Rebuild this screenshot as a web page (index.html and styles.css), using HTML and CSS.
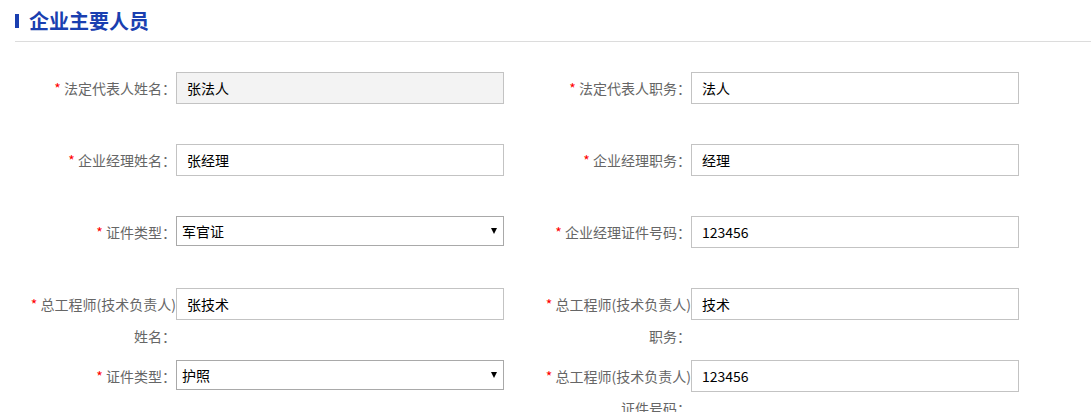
FILE: index.html
```html
<!DOCTYPE html>
<html>

<head>
    <meta charset="utf-8" />
    <title>企业主要人员</title>
    <meta name="viewport" content="width=device-width, initial-scale=1">
    <link rel="stylesheet" href="styles.css">
</head>

<body>

    <div class="panel">
        <div class="panel-title">
            <span class="title-mark"></span>
            <h3>企业主要人员</h3>
        </div>

        <form class="staff-form">
            <div class="form-item">
                <label class="form-label"><span class="req">*</span> 法定代表人姓名：</label>
                <input class="form-input" type="text" value="张法人" disabled>
            </div>
            <div class="form-item">
                <label class="form-label"><span class="req">*</span> 法定代表人职务：</label>
                <input class="form-input" type="text" value="法人">
            </div>

            <div class="form-item">
                <label class="form-label"><span class="req">*</span> 企业经理姓名：</label>
                <input class="form-input" type="text" value="张经理">
            </div>
            <div class="form-item">
                <label class="form-label"><span class="req">*</span> 企业经理职务：</label>
                <input class="form-input" type="text" value="经理">
            </div>

            <div class="form-item">
                <label class="form-label"><span class="req">*</span> 证件类型：</label>
                <span class="select-wrap">
                    <select class="form-select">
                        <option>身份证</option>
                        <option selected>军官证</option>
                        <option>护照</option>
                    </select>
                </span>
            </div>
            <div class="form-item">
                <label class="form-label"><span class="req">*</span> 企业经理证件号码：</label>
                <input class="form-input" type="text" value="123456">
            </div>

            <div class="form-item">
                <label class="form-label"><span class="req">*</span> 总工程师(技术负责人)姓名：</label>
                <input class="form-input" type="text" value="张技术">
            </div>
            <div class="form-item">
                <label class="form-label"><span class="req">*</span> 总工程师(技术负责人)职务：</label>
                <input class="form-input" type="text" value="技术">
            </div>

            <div class="form-item">
                <label class="form-label"><span class="req">*</span> 证件类型：</label>
                <span class="select-wrap">
                    <select class="form-select">
                        <option>身份证</option>
                        <option>军官证</option>
                        <option selected>护照</option>
                    </select>
                </span>
            </div>
            <div class="form-item">
                <label class="form-label"><span class="req">*</span> 总工程师(技术负责人)证件号码：</label>
                <input class="form-input" type="text" value="123456">
            </div>
        </form>
    </div>

</body>

</html>
```

FILE: styles.css
```css
html,
body {
    overflow: hidden;
}

body {
    margin: 0;
    background: #fff;
    font-family: "Microsoft YaHei", "Noto Sans CJK SC", sans-serif;
    font-size: 14px;
    color: #333;
}

.panel-title {
    display: flex;
    align-items: center;
    height: 41px;
    margin-left: 15px;
    border-bottom: 1px solid #dcdcdc;
}

.title-mark {
    display: inline-block;
    width: 4px;
    height: 14px;
    background: #1a3fb0;
    margin-right: 10px;
}

.panel-title h3 {
    margin: 0;
    font-size: 20px;
    font-weight: bold;
    color: #1a3fb0;
    line-height: 1;
}

.staff-form {
    display: grid;
    grid-template-columns: 515px 515px;
    grid-auto-rows: 72px;
    padding: 30px 0 0 26px;
}

.form-item {
    display: flex;
    align-items: flex-start;
}

.form-label {
    width: 150px;
    flex-shrink: 0;
    text-align: right;
    line-height: 32px;
    color: #666;
}

.req {
    color: #f00;
}

.form-input {
    box-sizing: border-box;
    width: 328px;
    height: 32px;
    padding: 0 10px;
    border: 1px solid #c3c3c3;
    outline: 0;
    font-family: inherit;
    font-size: 14px;
    color: #000;
    background: #fff;
}

.form-input:disabled {
    background: #f3f3f3;
    color: #000;
}

.select-wrap {
    position: relative;
    display: inline-block;
}

.form-select {
    box-sizing: border-box;
    width: 328px;
    height: 30px;
    padding: 0 20px 0 5px;
    border: 1px solid #a9a9a9;
    border-radius: 0;
    outline: 0;
    appearance: none;
    -webkit-appearance: none;
    background: #fff;
    font-family: inherit;
    font-size: 14px;
    color: #000;
}

/* small black triangle of the dropdown */
.select-wrap::after {
    content: "";
    position: absolute;
    right: 7px;
    top: 12px;
    border-left: 3.5px solid transparent;
    border-right: 3.5px solid transparent;
    border-top: 6px solid #000;
    pointer-events: none;
}
```
